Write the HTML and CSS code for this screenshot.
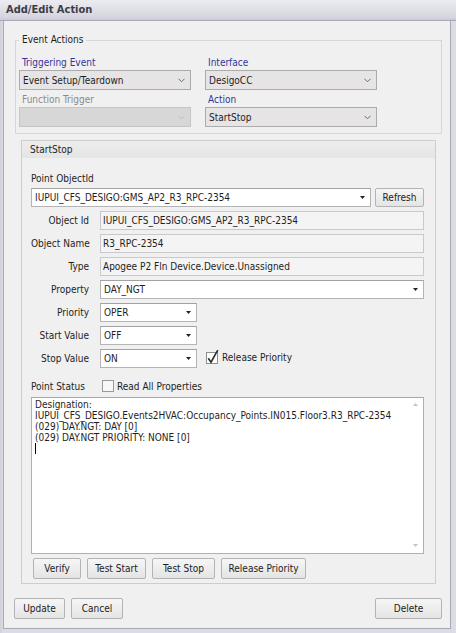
FILE: index.html
```html
<!DOCTYPE html>
<html lang="en">
<head>
<meta charset="utf-8">
<title>Add/Edit Action</title>
<link rel="stylesheet" href="styles.css">
</head>
<body>
<div class="window">
  <div class="titlebar">Add/Edit Action</div>
  <div class="frame">
    <fieldset class="event-actions">
      <legend>Event Actions</legend>
      <div class="ea-grid">
        <div class="ea-field">
          <div class="ea-label blue">Triggering Event</div>
          <div class="ddl"><span>Event Setup/Teardown</span><svg class="chev" width="7" height="5" viewBox="0 0 7 5"><path d="M0.5 0.8 L3.5 3.8 L6.5 0.8" fill="none" stroke="#6a6a6a" stroke-width="1"/></svg></div>
        </div>
        <div class="ea-field">
          <div class="ea-label blue">Interface</div>
          <div class="ddl"><span>DesigoCC</span><svg class="chev" width="7" height="5" viewBox="0 0 7 5"><path d="M0.5 0.8 L3.5 3.8 L6.5 0.8" fill="none" stroke="#6a6a6a" stroke-width="1"/></svg></div>
        </div>
        <div class="ea-field">
          <div class="ea-label gray">Function Trigger</div>
          <div class="ddl disabled"><span></span><svg class="chev" width="7" height="5" viewBox="0 0 7 5"><path d="M0.5 0.8 L3.5 3.8 L6.5 0.8" fill="none" stroke="#bdbdbd" stroke-width="1"/></svg></div>
        </div>
        <div class="ea-field">
          <div class="ea-label blue">Action</div>
          <div class="ddl"><span>StartStop</span><svg class="chev" width="7" height="5" viewBox="0 0 7 5"><path d="M0.5 0.8 L3.5 3.8 L6.5 0.8" fill="none" stroke="#6a6a6a" stroke-width="1"/></svg></div>
        </div>
      </div>
    </fieldset>

    <section class="startstop">
      <div class="ss-header">StartStop</div>
      <div class="ss-body">
        <div class="lbl-top">Point ObjectId</div>
        <div class="combo-row">
          <div class="combo wide"><span>IUPUI_CFS_DESIGO:GMS_AP2_R3_RPC-2354</span><svg class="tri" width="5" height="3" viewBox="0 0 5 3"><path d="M0 0H5L2.5 3Z" fill="#222"/></svg></div>
          <button class="btn refresh">Refresh</button>
        </div>
        <div class="form-grid">
          <div class="f-lbl">Object Id</div>
          <div class="ro">IUPUI_CFS_DESIGO:GMS_AP2_R3_RPC-2354</div>
          <div class="f-lbl">Object Name</div>
          <div class="ro">R3_RPC-2354</div>
          <div class="f-lbl">Type</div>
          <div class="ro">Apogee P2 Fln Device.Device.Unassigned</div>
          <div class="f-lbl">Property</div>
          <div class="combo"><span>DAY_NGT</span><svg class="tri" width="5" height="3" viewBox="0 0 5 3"><path d="M0 0H5L2.5 3Z" fill="#222"/></svg></div>
          <div class="f-lbl">Priority</div>
          <div class="f-inline"><div class="combo short"><span>OPER</span><svg class="tri" width="5" height="3" viewBox="0 0 5 3"><path d="M0 0H5L2.5 3Z" fill="#222"/></svg></div></div>
          <div class="f-lbl">Start Value</div>
          <div class="f-inline"><div class="combo short"><span>OFF</span><svg class="tri" width="5" height="3" viewBox="0 0 5 3"><path d="M0 0H5L2.5 3Z" fill="#222"/></svg></div></div>
          <div class="f-lbl">Stop Value</div>
          <div class="f-inline">
            <div class="combo short"><span>ON</span><svg class="tri" width="5" height="3" viewBox="0 0 5 3"><path d="M0 0H5L2.5 3Z" fill="#222"/></svg></div>
            <label class="check">
              <svg class="cb" width="14" height="16" viewBox="0 0 14 16"><rect x="0.5" y="3.5" width="11" height="11" fill="#fdfdfd" stroke="#8f8f8f"/><path d="M2.3 9.2 L5 13.2 L11.8 1.2" fill="none" stroke="#2a2a2a" stroke-width="1.6"/></svg>
              <span>Release Priority</span>
            </label>
          </div>
        </div>
        <div class="status-row">
          <div class="status-lbl">Point Status</div>
          <label class="check">
            <svg class="cb" width="12" height="12" viewBox="0 0 12 12"><rect x="0.5" y="0.5" width="11" height="11" fill="#f8f8f8" stroke="#9a9a9a"/></svg>
            <span>Read All Properties</span>
          </label>
        </div>
        <div class="status-box">
          <div class="status-text">
            <div>Designation:</div>
            <div>IUPUI_CFS_DESIGO.Events2HVAC:Occupancy_Points.IN015.Floor3.R3_RPC-2354</div>
            <div>(029) DAY.NGT: DAY [0]</div>
            <div>(029) DAY.NGT PRIORITY: NONE [0]</div>
            <div><span class="caret"></span></div>
          </div>
          <div class="vscroll">
            <svg width="5" height="3" viewBox="0 0 5 3"><path d="M0 3H5L2.5 0Z" fill="#c4c4c4"/></svg>
            <svg width="5" height="3" viewBox="0 0 5 3"><path d="M0 0H5L2.5 3Z" fill="#c4c4c4"/></svg>
          </div>
        </div>
        <div class="btn-row">
          <button class="btn w-verify">Verify</button>
          <button class="btn w-tstart">Test Start</button>
          <button class="btn w-tstop">Test Stop</button>
          <button class="btn w-rel">Release Priority</button>
        </div>
      </div>
    </section>

    <div class="footer">
      <button class="btn w-update">Update</button>
      <button class="btn w-cancel">Cancel</button>
      <button class="btn w-delete">Delete</button>
    </div>
  </div>
</div>
</body>
</html>
```

FILE: styles.css
```css
* { box-sizing: border-box; }
html, body { margin: 0; padding: 0; }
body {
  width: 456px;
  height: 633px;
  overflow: hidden;
  font-family: "DejaVu Sans Condensed", "Liberation Sans", sans-serif;
  font-size: 10px;
  color: #1e1e1e;
  background: #d9d9e2;
}
.window {
  width: 456px;
  height: 633px;
  display: flex;
  flex-direction: column;
  background: linear-gradient(90deg, #cfcfd9 0, #dcdce4 3px, #dcdce4 100%);
}
.titlebar {
  height: 21px;
  line-height: 20px;
  padding-left: 6px;
  font-weight: bold;
  font-size: 11px;
  color: #3c3c48;
  background: linear-gradient(#ebebf1, #d6d6e0 85%, #c9c9d6);
  border-bottom: 1px solid #a9a9b8;
}
.frame {
  flex: 1;
  display: flex;
  flex-direction: column;
  margin: 0 5px 4px 3px;
  border: 1px solid #a8a8b6;
  border-top: none;
  background: #f0f0f0;
  padding: 12px 8px 9px 11px;
}

/* Event Actions group */
.event-actions {
  margin: 0;
  border: 1px solid #d7d7d7;
  padding: 8px 3px 6px 3px;
  min-width: 0;
}
.event-actions legend {
  padding: 0 3px;
  line-height: 14px;
  color: #1e1e1e;
}
.ea-grid {
  display: grid;
  grid-template-columns: 172px 172px;
  column-gap: 14px;
  row-gap: 2px;
}
.ea-label {
  height: 15px;
  line-height: 15px;
  padding-left: 3px;
}
.blue { color: #33349a; }
.gray { color: #8a8a8a; }
.ddl {
  height: 20px;
  display: flex;
  align-items: center;
  justify-content: space-between;
  padding: 0 5px 0 3px;
  background: #e6e4e4;
  border: 1px solid #acacac;
}
.ddl.disabled {
  background: #d7d7d7;
  border-color: #c6c6c6;
}
.chev { display: block; }

/* StartStop group */
.startstop {
  margin: 6px 6px 0 6px;
  border: 1px solid #cdcdcd;
}
.ss-header {
  height: 17px;
  line-height: 17px;
  padding-left: 8px;
  background: linear-gradient(#ededed, #e5e5e5);
}
.ss-body {
  padding: 14px 11px 4px 9px;
}
.lbl-top {
  height: 14px;
  line-height: 14px;
  margin-bottom: 2px;
}
.combo-row {
  display: flex;
  gap: 4px;
  height: 19px;
}
.combo {
  height: 19px;
  display: flex;
  align-items: center;
  justify-content: space-between;
  padding: 0 5px 0 3px;
  background: #fff;
  border: 1px solid #b4b4b4;
  border-top-color: #a2a2a2;
}
.combo.wide { width: 340px; }
.combo.short { width: 97px; }
.tri { display: block; }
.btn {
  font: inherit;
  color: #222;
  margin: 0;
  padding: 0;
  height: 21px;
  border: 1px solid #b3b3b3;
  border-radius: 2px;
  background: linear-gradient(#f6f6f6, #e4e4e4);
}
.btn.refresh { width: 49px; height: 19px; }
.form-grid {
  margin-top: 4px;
  display: grid;
  grid-template-columns: 58px 1fr;
  column-gap: 11px;
  grid-auto-rows: 19px;
  row-gap: 4px;
}
.f-lbl {
  text-align: right;
  line-height: 19px;
  white-space: nowrap;
}
.ro {
  line-height: 17px;
  padding-left: 2px;
  background: #f4f4f4;
  border: 1px solid #c9c9c9;
}
.f-inline {
  display: flex;
  align-items: center;
  gap: 9px;
}
.check {
  display: flex;
  align-items: center;
  gap: 2px;
}
.check .cb { display: block; }
.f-inline .check { margin-top: -3px; }
.status-row {
  margin-top: 11px;
  height: 14px;
  display: flex;
  align-items: center;
}
.status-lbl {
  width: 71px;
}
.status-row .check { gap: 3px; }
.status-box {
  margin-top: 4px;
  height: 157px;
  display: flex;
  background: #fff;
  border: 1px solid #b0b0b0;
  border-top-color: #a6a6a6;
}
.status-text {
  flex: 1;
  padding: 1px 0 0 3px;
  line-height: 11px;
  white-space: nowrap;
}
.caret {
  display: inline-block;
  width: 1px;
  height: 11px;
  background: #000;
  vertical-align: top;
}
.vscroll {
  width: 15px;
  display: flex;
  flex-direction: column;
  align-items: center;
  justify-content: space-between;
  padding: 5px 0 6px 0;
}
.btn-row {
  margin-top: 4px;
  padding-left: 2px;
  display: flex;
  gap: 6px;
}
.w-verify { width: 48px; }
.w-tstart { width: 59px; }
.w-tstop { width: 63px; }
.w-rel { width: 85px; }
.footer {
  margin-top: auto;
  margin-left: -1px;
  display: flex;
  gap: 6px;
}
.w-update { width: 51px; }
.w-cancel { width: 52px; }
.w-delete { width: 67px; margin-left: auto; }
```
